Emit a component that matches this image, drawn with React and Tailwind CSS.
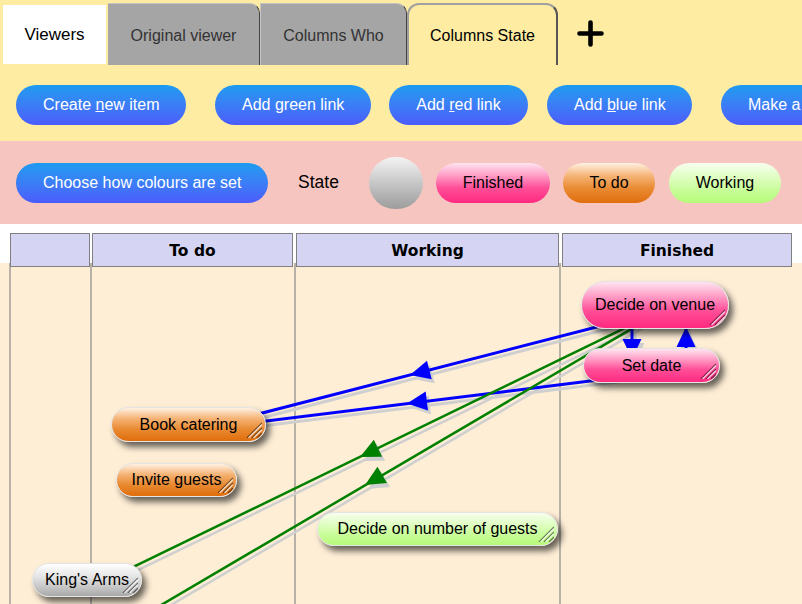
import React from "react";

const sans = "font-[family-name:'Liberation_Sans',Arial,sans-serif]";

const tones = {
  pink: "bg-[linear-gradient(to_bottom,#ffe4f0_0%,#ffa0c8_30%,#ff4f98_62%,#ff2a80_100%)]",
  orange: "bg-[linear-gradient(to_bottom,#fff1e2_0%,#f5b476_32%,#e98a32_64%,#e06e0c_100%)]",
  green: "bg-[linear-gradient(to_bottom,#f7ffee_0%,#defebf_38%,#c6fd96_70%,#b6fa7a_100%)]",
  gray: "bg-[linear-gradient(to_bottom,#ffffff_0%,#e6e6e6_38%,#c6c6c6_72%,#a8a8a8_100%)]",
};

const nodes = [
  { label: "Decide on venue", tone: "pink", pos: "left-[581px] top-[18px] w-[148px] h-[48px]" },
  { label: "Set date", tone: "pink", pos: "left-[583px] top-[85px] w-[137px] h-[35px]" },
  { label: "Book catering", tone: "orange", pos: "left-[111px] top-[144px] w-[155px] h-[35px]" },
  { label: "Invite guests", tone: "orange", pos: "left-[116px] top-[200px] w-[121px] h-[34px]" },
  { label: "Decide on number of guests", tone: "green", pos: "left-[317px] top-[249px] w-[241px] h-[34px]" },
  { label: "King's Arms", tone: "gray", pos: "left-[32px] top-[300px] w-[110px] h-[34px]" },
];

// links in page coordinates, arrow tip sits on the line
const links = [
  { c: "#0000ff", w: 3, from: [620, 321], to: [200, 429], tip: [410, 375] },
  { c: "#0000ff", w: 3, from: [650, 373.6], to: [190, 430.5], tip: [407, 403.5] },
  { c: "#008000", w: 2.5, from: [640, 320.7], to: [120, 573.4], tip: [360, 457] },
  { c: "#008000", w: 2.5, from: [640, 323.9], to: [100, 640.9], tip: [365, 485] },
  { c: "#0000ff", w: 3, from: [632, 305], to: [632, 366], tip: [632, 359] },
  { c: "#0000ff", w: 3, from: [686, 366], to: [686, 305], tip: [686, 327] },
];

const arrowPoints = (l, len = 20, half = 9.5) => {
  const dx = l.to[0] - l.from[0];
  const dy = l.to[1] - l.from[1];
  const d = Math.hypot(dx, dy);
  const ux = dx / d;
  const uy = dy / d;
  const bx = l.tip[0] - ux * len;
  const by = l.tip[1] - uy * len;
  return `${l.tip[0]},${l.tip[1]} ${bx - uy * half},${by + ux * half} ${bx + uy * half},${by - ux * half}`;
};

const Grip = () => (
  <svg className="absolute right-[3px] bottom-[3px]" width="18" height="18" viewBox="0 0 18 18">
    <g strokeWidth="1.3">
      <line x1="3" y1="18" x2="18" y2="3" stroke="rgba(0,0,0,0.5)" />
      <line x1="4.5" y1="18" x2="18" y2="4.5" stroke="rgba(255,255,255,0.75)" />
      <line x1="8" y1="18" x2="18" y2="8" stroke="rgba(0,0,0,0.5)" />
      <line x1="9.5" y1="18" x2="18" y2="9.5" stroke="rgba(255,255,255,0.75)" />
      <line x1="13" y1="18" x2="18" y2="13" stroke="rgba(0,0,0,0.5)" />
    </g>
  </svg>
);

const Btn = ({ className, children }) => (
  <button className={`h-[40px] px-[27px] rounded-full bg-linear-to-b from-[#1a9bf0] to-[#4b5bfb] text-white text-[16px] whitespace-nowrap shrink-0 ${className}`}>
    {children}
  </button>
);

const Legend = ({ tone, children, className }) => (
  <div className={`h-[40px] rounded-full flex items-center justify-center whitespace-nowrap shrink-0 text-[16px] text-black ${tones[tone]} ${className}`}>
    {children}
  </div>
);

const App = () => {
  return (
    <div className={`w-[802px] h-[604px] overflow-hidden bg-white ${sans}`}>
      {/* viewer tabs */}
      <div className="h-[65px] bg-[#fdeca2] flex items-start">
        <div className="ml-[3px] mt-[5px] w-[103px] h-[59px] bg-white flex items-center justify-center pt-[1px] text-[17px] text-black">
          Viewers
        </div>
        <div className="ml-[2px] mt-[3px] w-[152px] h-[62px] bg-[#a5a5a5] border-t border-t-[#c2c2c2] border-r border-r-[#444] rounded-tr-[10px] flex items-center justify-center pt-[2px] text-[16px] text-[#333]">
          Original viewer
        </div>
        <div className="mt-[3px] w-[147px] h-[62px] bg-[#a5a5a5] border-t border-t-[#c2c2c2] border-l border-l-[#c6c6c6] border-r border-r-[#444] rounded-tr-[10px] flex items-center justify-center pt-[2px] text-[16px] text-[#333]">
          Columns Who
        </div>
        <div className="mt-[3px] w-[151px] h-[62px] border-2 border-b-0 border-[#a0a0a0] border-r-[#555] rounded-t-[12px] flex items-center justify-center pt-[2px] text-[16px] text-black">
          Columns State
        </div>
        <svg className="ml-[19px] mt-[20px]" width="27" height="27" viewBox="0 0 27 27">
          <path d="M13.5 2.5v22M2.5 13.5h22" stroke="#000" strokeWidth="4.6" strokeLinecap="round" />
        </svg>
      </div>

      {/* toolbar */}
      <div className="h-[76px] bg-[#fdeca2] flex items-start pt-[20px]">
        <Btn className="ml-[16px] w-[170px]">
          Create <span className="underline">n</span>ew item
        </Btn>
        <Btn className="ml-[29px] w-[156px]">Add green link</Btn>
        <Btn className="ml-[18px] w-[139px]">
          Add <span className="underline">r</span>ed link
        </Btn>
        <Btn className="ml-[19px] w-[145px]">
          Add <span className="underline">b</span>lue link
        </Btn>
        <Btn className="ml-[29px]">Make a link</Btn>
      </div>

      {/* colour settings */}
      <div className="h-[83px] bg-[#f7c5bf] flex items-center">
        <Btn className="ml-[16px] w-[252px]">Choose how colours are set</Btn>
        <span className="ml-[30px] w-[41px] text-[17.5px] text-black whitespace-nowrap">State</span>
        <div className="ml-[30px] w-[54px] h-[52px] shrink-0 rounded-full bg-linear-to-b from-[#f4f4f4] to-[#9c9c9c]" />
        <Legend tone="pink" className="ml-[13px] w-[114px]">Finished</Legend>
        <Legend tone="orange" className="ml-[13px] w-[92px]">To do</Legend>
        <Legend tone="green" className="ml-[14px] w-[112px]">Working</Legend>
      </div>

      <div className="h-[9px]" />

      {/* column headers */}
      <div className="relative z-10 h-[34px] flex pl-[10px] font-[family-name:'DejaVu_Sans',Verdana,sans-serif] font-bold text-[15.5px] text-black">
        <div className="w-[80px] border-[1.5px] border-[#808080] bg-[#d5d5f3]" />
        <div className="ml-[2px] w-[201px] pt-[3px] border-[1.5px] border-[#808080] bg-[#d5d5f3] flex items-center justify-center">To do</div>
        <div className="ml-[3px] w-[263px] pt-[3px] border-[1.5px] border-[#808080] bg-[#d5d5f3] flex items-center justify-center">Working</div>
        <div className="ml-[3px] w-[230px] pt-[3px] border-[1.5px] border-[#808080] bg-[#d5d5f3] flex items-center justify-center">Finished</div>
      </div>

      {/* board */}
      <div className="relative -mt-[4px] h-[341px] bg-[#feeed6] flex">
        <div className="w-[9px]" />
        <div className="w-[81px] border-l-2 border-[#b8b1a7]" />
        <div className="w-[204px] border-l-2 border-[#b8b1a7]" />
        <div className="w-[265px] border-l-2 border-[#b8b1a7]" />
        <div className="flex-1 border-l-2 border-[#b8b1a7]" />

        <svg className="absolute inset-0" width="802" height="341" viewBox="0 263 802 341">
          <g transform="translate(3 4)">
            {links.map((l, i) => (
              <g key={i}>
                <line x1={l.from[0]} y1={l.from[1]} x2={l.to[0]} y2={l.to[1]} stroke="#cfcfcf" strokeWidth={l.w} />
                <polygon points={arrowPoints(l)} fill="#cfcfcf" />
              </g>
            ))}
          </g>
          {links.map((l, i) => (
            <g key={i}>
              <line x1={l.from[0]} y1={l.from[1]} x2={l.to[0]} y2={l.to[1]} stroke={l.c} strokeWidth={l.w} />
              <polygon points={arrowPoints(l)} fill={l.c} />
            </g>
          ))}
        </svg>

        {nodes.map((n) => (
          <div
            key={n.label}
            className={`absolute ${n.pos} ${tones[n.tone]} overflow-hidden rounded-full border border-[#e4e4e4] shadow-[4px_5px_6px_rgba(0,0,0,0.6)] flex items-center justify-center text-[16px] text-black whitespace-nowrap`}
          >
            {n.label}
            <Grip />
          </div>
        ))}
      </div>
    </div>
  );
};

export default App;
